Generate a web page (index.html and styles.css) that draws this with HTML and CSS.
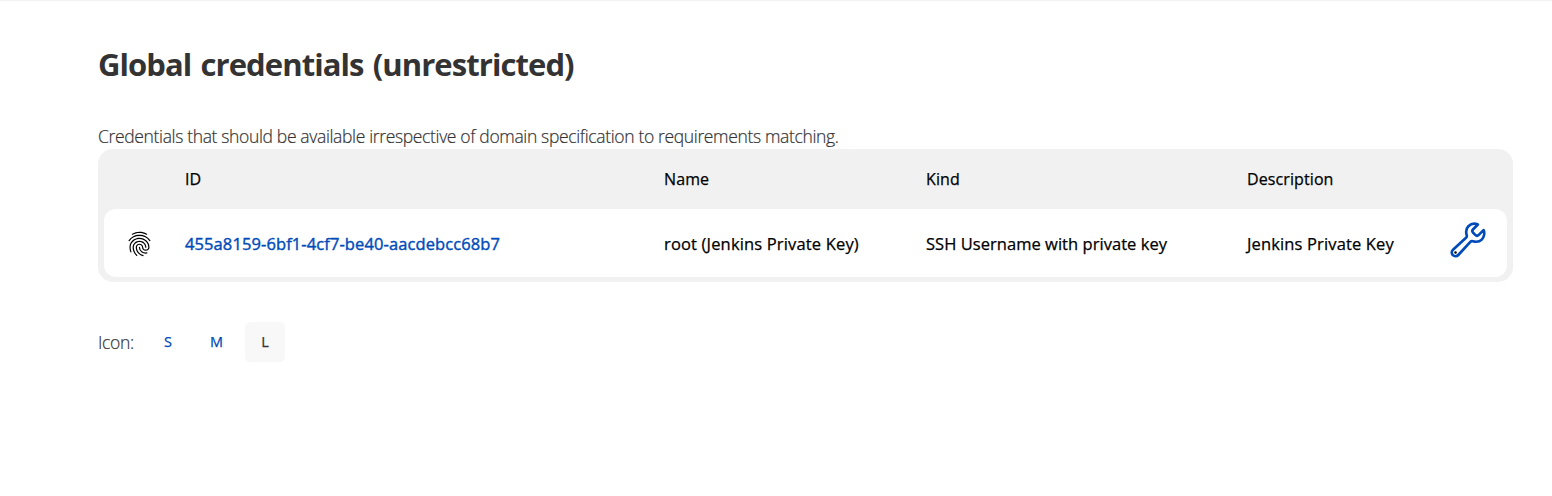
FILE: index.html
```html
<!DOCTYPE html>
<html lang="en">
<head>
<meta charset="utf-8">
<title>Global credentials (unrestricted)</title>
<link rel="stylesheet" href="styles.css">
</head>
<body>
<main class="page">
  <h1 class="title">Global credentials (unrestricted)</h1>
  <p class="intro">Credentials that should be available irrespective of domain specification to requirements matching.</p>
  <section class="table">
    <div class="row head">
      <span></span><span>ID</span><span>Name</span><span>Kind</span><span>Description</span><span></span>
    </div>
    <div class="row body">
      <svg class="finger" viewBox="0 0 512 512" preserveAspectRatio="none"><path d="M390.42 75.28a10.45 10.45 0 01-5.32-1.44C340.72 50.08 302.35 40 256.35 40c-45.77 0-89.23 11.28-128.76 33.84C122 77 115.11 74.8 111.87 69a12.4 12.4 0 014.63-16.32A281.81 281.81 0 01256.35 16c49.23 0 92.23 11.28 139.39 36.48a12 12 0 014.85 16.08 11.3 11.3 0 01-10.17 6.72zm-330.79 126a11.73 11.73 0 01-6.7-2.16 12.26 12.26 0 01-2.78-16.8c22.89-33.6 52-60 86.69-78.48 72.58-38.88 165.41-39.12 238.23-.24 34.68 18.48 63.8 44.64 86.69 78a12.29 12.29 0 01-2.78 16.8 11.26 11.26 0 01-16.18-2.88c-20.8-30.24-47.15-54-78.36-70.56-66.34-35.28-151.18-35.28-217.29.24-31.44 16.8-57.79 40.8-78.59 71a10 10 0 01-8.93 5.08zM204.1 491a10.66 10.66 0 01-8.09-3.6C175.9 466.48 165 453 149.55 424c-16-29.52-24.27-65.52-24.27-104.16 0-71.28 58.71-129.36 130.84-129.36S387 248.56 387 319.84a11.56 11.56 0 11-23.11 0c0-58.08-48.32-105.36-107.72-105.36S148.4 261.76 148.4 319.84c0 34.56 7.39 66.48 21.49 92.4 14.8 27.6 25 39.36 42.77 58.08a12.67 12.67 0 010 17 12.44 12.44 0 01-8.56 3.68zm165.75-44.4c-27.51 0-51.78-7.2-71.66-21.36a129.1 129.1 0 01-55-105.36 11.57 11.57 0 1123.12 0 104.28 104.28 0 0044.84 85.44c16.41 11.52 35.6 17 58.72 17a147.41 147.41 0 0024-2.4c6.24-1.2 12.25 3.12 13.4 9.84a11.92 11.92 0 01-9.47 13.92 152.28 152.28 0 01-27.95 2.88zM323.38 496a13 13 0 01-3-.48c-36.76-10.56-60.8-24.72-86-50.4-32.37-33.36-50.16-77.76-50.16-125.28 0-38.88 31.9-70.56 71.19-70.56s71.2 31.68 71.2 70.56c0 25.68 21.5 46.56 48.08 46.56s48.08-20.88 48.08-46.56c0-90.48-75.13-163.92-167.59-163.92-65.65 0-125.75 37.92-152.79 96.72-9 19.44-13.64 42.24-13.64 67.2 0 18.72 1.61 48.24 15.48 86.64 2.32 6.24-.69 13.2-6.7 15.36a11.34 11.34 0 01-14.79-7 276.39 276.39 0 01-16.88-94.8c0-28.8 5.32-55 15.72-77.76 30.75-67 98.94-110.4 173.6-110.4 105.18 0 190.71 84.24 190.71 187.92 0 38.88-31.9 70.56-71.2 70.56s-71.2-31.68-71.2-70.56c.01-25.68-21.49-46.6-48.07-46.6s-48.08 20.88-48.08 46.56c0 41 15.26 79.44 43.23 108.24 22 22.56 43 35 75.59 44.16 6.24 1.68 9.71 8.4 8.09 14.64a11.39 11.39 0 01-10.87 9.2z"/></svg>
      <a class="link id">455a8159-6bf1-4cf7-be40-aacdebcc68b7</a>
      <span class="name">root (Jenkins Private Key)</span>
      <span class="kind">SSH Username with private key</span>
      <span class="desc">Jenkins Private Key</span>
      <svg class="wrench" viewBox="0 0 512 512"><path d="M393.87 190a32.1 32.1 0 01-45.25 0l-26.57-26.57a32.09 32.09 0 010-45.26L382.19 58a1 1 0 00-.3-1.64c-38.82-16.64-89.15-8.16-121.11 23.57-30.58 30.35-32.32 76-21.12 115.84a31.93 31.93 0 01-9.06 32.08L64 380a48.17 48.17 0 1068 68l153.86-167a31.93 31.93 0 0131.6-9.13c39.54 10.59 84.54 8.6 114.72-21.19 32.49-32 39.5-88.56 23.75-120.93a1 1 0 00-1.6-.26z"/><circle cx="96" cy="416" r="16"/></svg>
    </div>
  </section>
  <nav class="sizes">
    <span class="label">Icon:</span>
    <a class="size link">S</a><a class="size link">M</a><span class="size active">L</span>
  </nav>
</main>
</body>
</html>
```
FILE: styles.css
```css
* { box-sizing: border-box; }
body {
  margin: 0;
  background: #fff;
  color: #333;
  font-family: "Open Sans", "Noto Sans", sans-serif;
  border-top: 1px solid #f3f3f3;
}
.page { padding: 41px 39px 0 98px; }
.title {
  margin: 0;
  font-size: 31px;
  font-weight: 700;
  line-height: 44px;
  letter-spacing: -0.92px;
  word-spacing: 2px;
  white-space: nowrap;
}
.intro {
  margin: 39px 0 0;
  height: 24px;
  font-size: 17.5px;
  font-weight: 300;
  line-height: 22px;
  letter-spacing: -0.35px;
  white-space: nowrap;
  -webkit-text-stroke: 0.2px #333;
}
.table {
  height: 133px;
  padding: 0 6px 5px;
  border-radius: 15px;
  background: #f1f1f1;
  color: #000;
  font-size: 16px;
  -webkit-text-stroke: 0.25px currentColor;
}
.row {
  display: grid;
  grid-template-columns: 58px 479px 262px 321px 201px 1fr;
  align-items: center;
  padding-left: 23px;
  white-space: nowrap;
}
.head { height: 60px; letter-spacing: 0.1px; }
.body {
  height: 68px;
  border-radius: 12px;
  background: #fff;
  font-size: 16.5px;
}
.body > a, .body > span { padding-top: 1px; }
.id { letter-spacing: 0.1px; -webkit-text-stroke-width: 0.4px; }
.name { letter-spacing: 0.16px; }
.kind { letter-spacing: 0.04px; }
.desc { letter-spacing: 0.14px; }
.link { color: #004bb9; }
.finger { width: 27px; height: 26px; margin: 2px 0 0 -1.5px; }
.wrench {
  width: 40px;
  height: 40px;
  margin-top: -6px;
}
.wrench path {
  fill: none;
  stroke: #004bb9;
  stroke-width: 34;
  stroke-linecap: round;
  stroke-linejoin: round;
}
.sizes {
  display: flex;
  align-items: center;
  margin-top: 40px;
  height: 40px;
}
.label {
  width: 50px;
  font-size: 17.5px;
  font-weight: 300;
  letter-spacing: -0.3px;
  -webkit-text-stroke: 0.2px #333;
}
.size {
  width: 40px;
  height: 40px;
  margin-right: 8.5px;
  border-radius: 5px;
  line-height: 40px;
  text-align: center;
  font-size: 14.5px;
  -webkit-text-stroke: 0.25px currentColor;
}
.active { background: #f8f8f8; }
```
